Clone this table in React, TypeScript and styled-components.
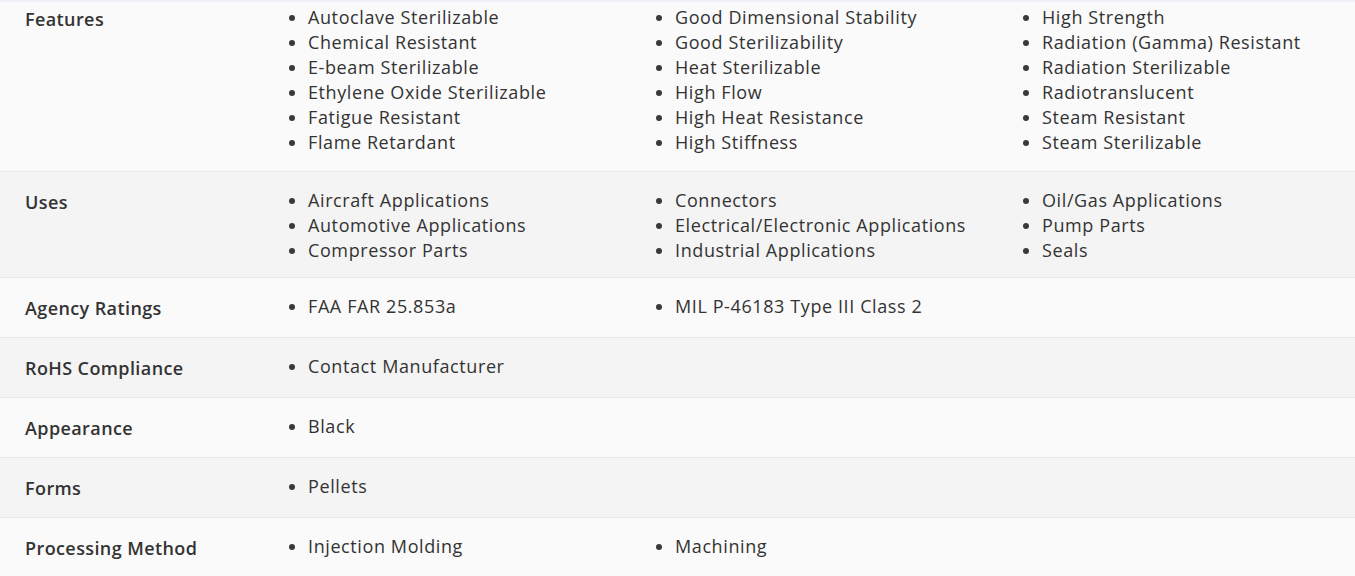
import React from 'react';
import styled, { createGlobalStyle } from 'styled-components';

const GlobalStyle = createGlobalStyle`
  html, body {
    margin: 0;
    padding: 0;
    background: #fafafa;
  }

  body {
    font-family: 'Open Sans', 'Liberation Sans', sans-serif;
    color: #333;
    overflow: hidden;
  }
`;

const Table = styled.div`
  width: 1355px;
  border-top: 2px solid #eef2f8;
`;

const Row = styled.div<{ $shaded: boolean; $first?: boolean }>`
  display: grid;
  grid-template-columns: 289px 1fr;
  padding: ${(p) => (p.$first ? '3px 0 16px' : '16px 0 14px')};
  background-color: ${(p) => (p.$shaded ? '#f4f4f4' : '#fafafa')};
  border-bottom: 1px solid #e9e9e9;
`;

const Label = styled.div`
  padding-left: 25px;
  font-size: 18px;
  line-height: 29px;
  font-weight: 600;
  letter-spacing: 0.4px;
  color: #333;
`;

const Values = styled.div`
  display: grid;
  grid-template-columns: repeat(3, 367px);
  align-items: start;
`;

const List = styled.ul`
  margin: 0;
  padding: 0;
  list-style: none;
`;

const Item = styled.li`
  display: flex;
  align-items: center;
  font-size: 18px;
  line-height: 25px;
  letter-spacing: 0.6px;
  color: #333;
  white-space: nowrap;

  &::before {
    content: '';
    width: 6px;
    height: 6px;
    margin-right: 13px;
    border-radius: 50%;
    background: #3a3a3a;
    flex-shrink: 0;
  }
`;

type Spec = {
  label: string;
  columns: string[][];
};

const specs: Spec[] = [
  {
    label: 'Features',
    columns: [
      [
        'Autoclave Sterilizable',
        'Chemical Resistant',
        'E-beam Sterilizable',
        'Ethylene Oxide Sterilizable',
        'Fatigue Resistant',
        'Flame Retardant',
      ],
      [
        'Good Dimensional Stability',
        'Good Sterilizability',
        'Heat Sterilizable',
        'High Flow',
        'High Heat Resistance',
        'High Stiffness',
      ],
      [
        'High Strength',
        'Radiation (Gamma) Resistant',
        'Radiation Sterilizable',
        'Radiotranslucent',
        'Steam Resistant',
        'Steam Sterilizable',
      ],
    ],
  },
  {
    label: 'Uses',
    columns: [
      ['Aircraft Applications', 'Automotive Applications', 'Compressor Parts'],
      ['Connectors', 'Electrical/Electronic Applications', 'Industrial Applications'],
      ['Oil/Gas Applications', 'Pump Parts', 'Seals'],
    ],
  },
  {
    label: 'Agency Ratings',
    columns: [['FAA FAR 25.853a'], ['MIL P-46183 Type III Class 2']],
  },
  { label: 'RoHS Compliance', columns: [['Contact Manufacturer']] },
  { label: 'Appearance', columns: [['Black']] },
  { label: 'Forms', columns: [['Pellets']] },
  {
    label: 'Processing Method',
    columns: [['Injection Molding'], ['Machining']],
  },
];

const App = () => {
  return (
    <>
      <GlobalStyle />
      <Table>
        {specs.map((spec, i) => (
          <Row key={spec.label} $shaded={i % 2 === 1} $first={i === 0}>
            <Label>{spec.label}</Label>
            <Values>
              {spec.columns.map((col, j) => (
                <List key={j}>
                  {col.map((item) => (
                    <Item key={item}>{item}</Item>
                  ))}
                </List>
              ))}
            </Values>
          </Row>
        ))}
      </Table>
    </>
  );
};

export default App;
